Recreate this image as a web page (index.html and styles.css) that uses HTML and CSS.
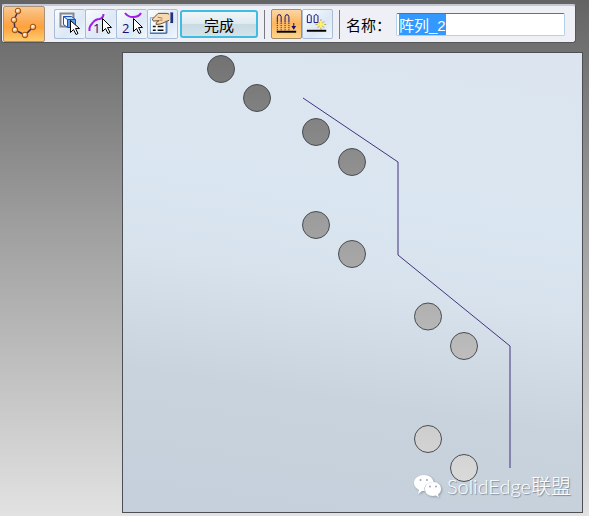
FILE: index.html
```html
<!DOCTYPE html>
<html lang="zh-CN">
<head>
  <meta charset="UTF-8" />
  <title>阵列</title>
  <meta name="viewport" content="width=device-width, initial-scale=1.0"/>
  <link rel="stylesheet" href="styles.css">
</head>
<body>

  <form class="toolbar" id="pattern-form">
    <button type="button" class="mode-button" aria-label="沿曲线阵列">
      <svg width="40" height="34" viewBox="0 0 40 34">
        <defs>
          <radialGradient id="ball" cx="0.4" cy="0.35" r="0.65">
            <stop offset="0" stop-color="#fff"/>
            <stop offset="0.4" stop-color="#ffd7a8"/>
            <stop offset="1" stop-color="#d0701c"/>
          </radialGradient>
        </defs>
        <path d="M14 4L10 13L11 23L21 28L29 20" fill="none" stroke="#34305c" stroke-width="1.500"/>
        <g fill="url(#ball)" stroke="#a0500f">
          <circle cx="14" cy="4" r="2.800"/>
          <circle cx="10" cy="13" r="2.800"/>
          <circle cx="11" cy="23" r="2.800"/>
          <circle cx="21" cy="28" r="2.800"/>
          <circle cx="29" cy="20" r="2.800"/>
        </g>
      </svg>
    </button>

    <div class="group steps">
      <button type="button" class="tool" aria-label="选择特征">
        <svg width="30" height="28" viewBox="0 0 30 28">
          <path d="M5.500 3.500h13v13h-13z" fill="#eef3fa" stroke="#85888e" stroke-width="2"/>
          <path d="M8.500 6.500h8l4 3v8h-8l-4-3z" fill="#b9dcff"/>
          <path d="M12.500 9.500h8v8h-8z" fill="#5a9df0"/>
          <path d="M9 7l3 3v7l-3-3z" fill="#fff"/>
          <path d="M8.500 6.500h8l4 3v8h-8l-4-3zM12.500 17v-7.500h8M12.500 9.500l-4-3" fill="none" stroke="#1c50bd"/>
          <path class="cursor" d="M15.500 10.500v12l3-3 2.500 5 2-1-2.500-5h4z"/>
        </svg>
      </button>
      <button type="button" class="tool" aria-label="选择曲线">
        <svg width="30" height="28" viewBox="0 0 30 28">
          <path class="curve" d="M3.500 21v-3q1-3 3-5 3-4 7-4 4-1 4-5"/>
          <text class="digit" x="7" y="23">1</text>
          <path class="cursor" d="M16.500 8.500v13l3-3 2.500 5 2-1-2.500-5h4z"/>
        </svg>
      </button>
      <button type="button" class="tool" aria-label="选择锚点">
        <svg width="30" height="28" viewBox="0 0 30 28">
          <path class="curve" d="M8 3q3 4 8 4 6 0 8-4"/>
          <text class="digit" x="5" y="23">2</text>
          <path class="cursor" d="M16.500 8.500v13l3-3 2.500 5 2-1-2.500-5h4z"/>
        </svg>
      </button>
      <button type="button" class="tool" aria-label="选项">
        <svg width="30" height="28" viewBox="0 0 30 28">
          <path d="M2.500 7.500h16v16h-16z" fill="#f6fbff" stroke="#7ea7d6"/>
          <path d="M2 23.500h17.500V11" fill="none" stroke="#1c4f91"/>
          <path d="M5 16.500h3M5 20.500h3M10 16.500h6M10 20.500h6" stroke="#111" stroke-width="1.500"/>
          <path d="M6.500 7l4-4h9l3 1v6l-3 1-4 2-3 1-4 .5v-2l3-2-6 .5-1-2z" fill="#f8d9b0" stroke="#6b4a2a"/>
          <path d="M10 7l5 1M12 10h3" stroke="#a87b4c"/>
          <path d="M23 2h3v11h-3z" fill="#20307e"/>
          <path d="M22.500 3v9" stroke="#fff"/>
        </svg>
      </button>
    </div>

    <button type="submit" class="finish">完成</button>
    <span class="separator"></span>

    <div class="group">
      <button type="button" class="tool active" aria-label="快速阵列" aria-pressed="true">
        <svg width="30" height="28" viewBox="0 0 30 28">
          <path class="bar" d="M5.500 12.500v-6l1-2h2l1 2v6M13.500 12.500v-6l1-2h2l1 2v6"/>
          <path class="bar dots" d="M5.500 13v9M9.500 13v9M13.500 13v9M17.500 13v9"/>
          <path d="M5 22h20" stroke="#000" stroke-width="2"/>
          <path d="M22.500 13v4" stroke="#10107c"/>
          <path d="M20 16h5l-2.500 4z" fill="#10107c"/>
        </svg>
      </button>
      <button type="button" class="tool" aria-label="智能阵列" aria-pressed="false">
        <svg width="30" height="28" viewBox="0 0 30 28">
          <path class="bar" d="M4.500 12.500v-7l1-1h2l1 1v7zM11.500 12.500v-7l1-1h2l1 1v7z"/>
          <path d="M18.500 9v11M13 14.500h11M15 11l7 7M22 11l-7 7" stroke="#b9a63c"/>
          <path d="M18.500 11v7M15 14.500h7" stroke="#fff36a" stroke-width="2"/>
          <path d="M4 21h20" stroke="#000" stroke-width="2"/>
        </svg>
      </button>
    </div>

    <span class="separator"></span>
    <label for="pattern-name">名称：</label>
    <input type="text" id="pattern-name" name="patternName" value="阵列_2" autocomplete="off" spellcheck="false" />
  </form>

  <main class="viewport">
    <svg class="model" viewBox="0 0 461 461" role="img" aria-label="带孔板">
      <defs>
        <linearGradient id="steel" x1="0.55" y1="0" x2="0.4" y2="1">
          <stop offset="0" stop-color="#dce5ef"/>
          <stop offset="0.3" stop-color="#dae6f1"/>
          <stop offset="0.5" stop-color="#d7e2ed"/>
          <stop offset="0.75" stop-color="#c9d3dd"/>
          <stop offset="1" stop-color="#c5d0dc"/>
        </linearGradient>
        <mask id="holes">
          <rect width="461" height="461" fill="#fff"/>
          <g id="hole-set">
            <circle cx="99" cy="17" r="13.500"/>
            <circle cx="135" cy="46" r="13.500"/>
            <circle cx="194" cy="80" r="13.500"/>
            <circle cx="230" cy="110" r="13.500"/>
            <circle cx="194" cy="173" r="13.500"/>
            <circle cx="230" cy="202" r="13.500"/>
            <circle cx="306" cy="264.500" r="13.500"/>
            <circle cx="342" cy="294" r="13.500"/>
            <circle cx="306" cy="387" r="13.500"/>
            <circle cx="342" cy="416" r="13.500"/>
          </g>
        </mask>
      </defs>
      <rect width="461" height="461" fill="url(#steel)" mask="url(#holes)"/>
      <rect x="0.500" y="0.500" width="460" height="460" fill="none" stroke="#4c4f54"/>
      <use href="#hole-set" class="hole-edges"/>
      <path class="sketch" d="M181 46L276 110V203L388 294V416"/>
    </svg>

    <div class="watermark">
      <svg width="28" height="24" viewBox="0 0 28 24">
        <path d="M10 1c5 0 9 3 9.500 7-5 0-9 3-9 7l.3 2H8l-4 3 1-4C2 14 0 12 0 9c0-5 5-8 10-8z" fill="#fff"/>
        <path d="M19 8c5 0 8 3 8 7 0 2-1 4-3 5.500l1 3-3-2-3 .5c-5 0-8-3-8-7s3-7 8-7z" fill="#fff"/>
        <g fill="#9ba9b5">
          <circle cx="6.500" cy="6" r="1"/>
          <circle cx="13" cy="6" r="1"/>
          <circle cx="16" cy="12.500" r="1"/>
          <circle cx="22" cy="12.500" r="1"/>
        </g>
      </svg>
      <span>SolidEdge联盟</span>
    </div>
  </main>

  <script>
    const nameInput = document.getElementById("pattern-name");
    nameInput.focus();
    nameInput.select();

    document.getElementById("pattern-form").addEventListener("submit", function (e) {
      e.preventDefault();
    });
  </script>

</body>
</html>
```

FILE: styles.css
```css
* {
  box-sizing: border-box;
}

body {
  margin: 0;
  min-height: 100vh;
  padding: 4px 6px 3px 1px;
  font-family: 'Liberation Sans', 'Noto Sans CJK SC', sans-serif;
  font-size: 15px;
  color: #000;
  background: linear-gradient(#646464, #a0a0a0 45%, #e2e2e2) no-repeat;
}

svg {
  display: block;
}

.toolbar {
  display: flex;
  align-items: center;
  height: 39px;
  margin-right: 7px;
  padding: 0 10px 0 1px;
  background: #eef0f6;
  border: 1px solid #55565a;
  border-top: 2px solid #c5c9d5;
  border-radius: 3px;
}

.mode-button,
.tool,
.finish {
  display: flex;
  align-items: center;
  justify-content: center;
  flex-shrink: 0;
  padding: 0;
  font: inherit;
}

.mode-button {
  width: 42px;
  height: 36px;
  border: 1px solid #a8927a;
  border-radius: 2px;
  background: linear-gradient(#fbc88f, #fba850 45%, #fda33c 60%, #ffcc72);
}

.group {
  display: flex;
  flex-shrink: 0;
}

.steps {
  margin-left: 9px;
  margin-right: 2px;
}

.tool {
  width: 31px;
  height: 30px;
  border: 1px solid #a9bdd8;
  border-right-width: 0;
  border-radius: 2px;
  background: linear-gradient(135deg, #fafdff, #dce8f5 60%, #f0f8fd);
}

.tool:last-child {
  border-right-width: 1px;
}

.tool.active {
  border: 1px solid #a58c66;
  background: linear-gradient(#fbd6a4, #fdb65e 50%, #ffd58c);
}

.cursor {
  fill: #fff;
  stroke: #000;
}

.curve {
  fill: none;
  stroke: #a01ee6;
  stroke-width: 2;
}

.digit {
  fill: #10107c;
  font-family: 'Open Sans', sans-serif;
  font-size: 13px;
}

.bar {
  fill: none;
  stroke: #10107c;
}

.dots {
  stroke: #222;
  stroke-dasharray: 1 1;
}

.finish {
  width: 78px;
  height: 28px;
  border: 2px solid #40bce2;
  border-radius: 3px;
  background: linear-gradient(#eef5f8, #dfeaf0 48%, #c8dae3 52%, #d4e3e9);
}

.separator {
  flex-shrink: 0;
  width: 1px;
  height: 29px;
  margin: 0 6px;
  background: #777a80;
}

input[type="text"] {
  flex: 1;
  min-width: 0;
  height: 23px;
  margin-left: 5px;
  padding: 0 2px;
  border: 1px solid #b3d3ea;
  border-top-color: #3d7bad;
  border-radius: 2px;
  outline: none;
  font: inherit;
  background: #fff;
}

input[type="text"]::selection {
  color: #fff;
  background: #3399ff;
}

.viewport {
  position: relative;
  margin: 9px 0 0 121px;
}

.model {
  width: 100%;
  height: auto;
}

.hole-edges {
  fill: none;
  stroke: #4a4d50;
}

.sketch {
  fill: none;
  stroke: #41347c;
}

.watermark {
  position: absolute;
  right: 12px;
  bottom: 13px;
  display: flex;
  align-items: center;
  gap: 5px;
  color: #fff;
  font-family: Lato, 'Noto Sans CJK SC', sans-serif;
  font-size: 20px;
  font-weight: 300;
  line-height: 28px;
  text-shadow: 1px 1px 1px #7c8995;
}

.watermark svg {
  filter: drop-shadow(1px 1px 1px #8d9aa6);
}
```
